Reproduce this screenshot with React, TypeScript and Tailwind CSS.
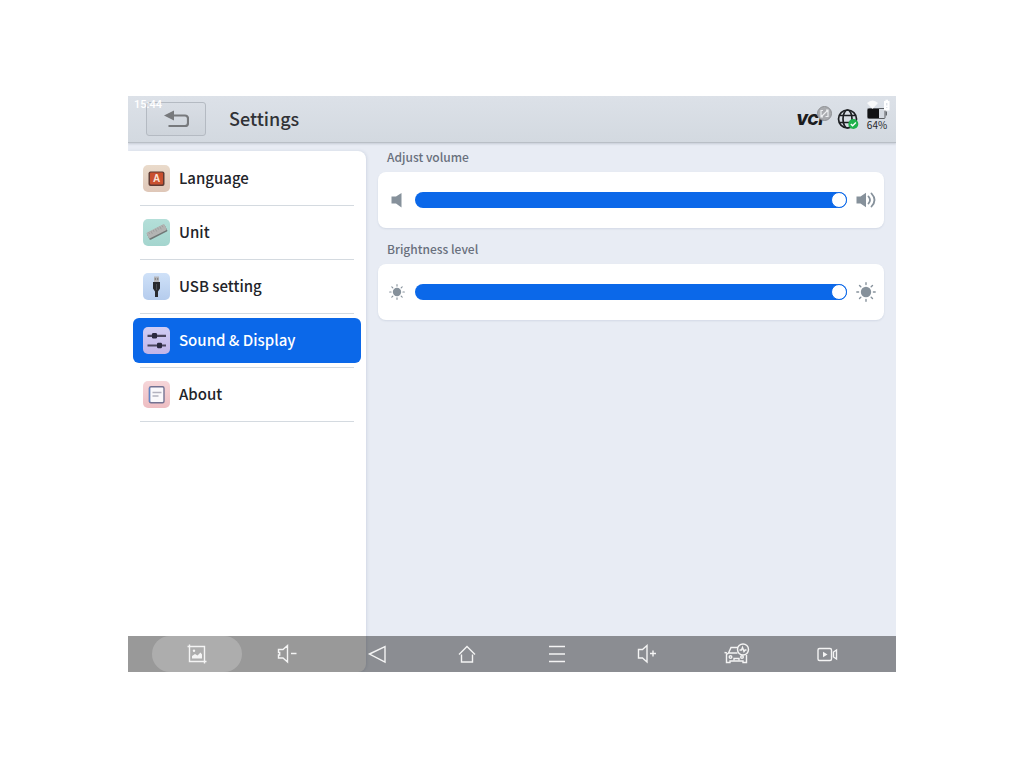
import React, { useState } from 'react';

type MenuItem = { id: string; label: string; tile: string; icon: React.ReactNode };

// Menu tile drawings, all on a 27x27 grid
const LanguageIcon = () => (
  <svg viewBox="0 0 27 27" className="size-full" aria-hidden="true">
    <rect x="5.5" y="6.5" width="16" height="14.5" rx="2" fill="#5f3a33" />
    <rect x="7" y="7.6" width="13" height="11.8" rx="1" fill="#c9502f" />
    <text x="13.5" y="17" textAnchor="middle" fontSize="10" fontWeight="700" fill="#fbe3d5" fontFamily="Liberation Sans, sans-serif">
      A
    </text>
  </svg>
);

const UnitIcon = () => (
  <svg viewBox="0 0 27 27" className="size-full" aria-hidden="true">
    <g transform="rotate(-27 14 13)">
      <rect x="4" y="9.5" width="20" height="7.5" rx="1" fill="#6f7776" />
      <rect x="4" y="9" width="20" height="6.5" rx="1" fill="#b3b4b3" />
      <path d="M6.5 9.5v2M9 9.5v3M11.5 9.5v2M14 9.5v3M16.5 9.5v2M19 9.5v3M21.5 9.5v2" stroke="#979998" strokeWidth=".7" />
    </g>
  </svg>
);

const UsbIcon = () => (
  <svg viewBox="0 0 27 27" className="size-full" aria-hidden="true">
    <rect x="11" y="3.5" width="5" height="6" fill="#b4b4b8" />
    <path d="M12.3 5v2M14.7 5v2" stroke="#777" strokeWidth=".9" />
    <path d="M10 9h7v6.5L15 18.5V24h-3v-5.5l-2-3z" fill="#292a2e" />
    <path d="M13.5 11v6" stroke="#55585e" strokeWidth=".8" />
  </svg>
);

const SlidersIcon = () => (
  <svg viewBox="0 0 27 27" className="size-full" aria-hidden="true">
    <path d="M4.5 8.8H23M4.5 18.5H23" stroke="#4b465e" strokeWidth="2.2" />
    <rect x="9" y="6" width="5" height="5.5" rx="1.2" fill="#2b2940" />
    <rect x="14" y="15.8" width="5" height="5.5" rx="1.2" fill="#2b2940" />
  </svg>
);

const AboutIcon = () => (
  <svg viewBox="0 0 27 27" className="size-full" aria-hidden="true">
    <rect x="6.5" y="5.7" width="14.5" height="16" rx="1.5" fill="#faf9fc" stroke="#737292" strokeWidth="1.4" />
    <path d="M6.5 6.5V21" stroke="#6185c8" strokeWidth="1.4" />
    <path d="M9.500 11.500h9M9.500 15h6" stroke="#b3b2bf" strokeWidth="1.3" />
  </svg>
);

const menu: MenuItem[] = [
  { id: 'language', label: 'Language', tile: 'from-[#eadbcb] to-[#dfc7b8]', icon: <LanguageIcon /> },
  { id: 'unit', label: 'Unit', tile: 'from-[#b4dfd9] to-[#a4d5ce]', icon: <UnitIcon /> },
  { id: 'usb', label: 'USB setting', tile: 'from-[#cfe1f8] to-[#b5cced]', icon: <UsbIcon /> },
  { id: 'sound', label: 'Sound & Display', tile: 'from-[#d0cdf4] to-[#c3b5e8]', icon: <SlidersIcon /> },
  { id: 'about', label: 'About', tile: 'from-[#f6d6d9] to-[#edbdc2]', icon: <AboutIcon /> },
];

const SpeakerLow = () => (
  <svg viewBox="0 0 20 20" className="size-5" fill="#86919b" aria-hidden="true">
    <path d="M4.5 6.5H9L14.500 3v14.500L9 13.500H4.500z" />
  </svg>
);

const SpeakerHigh = () => (
  <svg viewBox="0 0 20 20" className="size-5" aria-hidden="true">
    <path d="M.5 6.5h4L10 2.8v14.400l-5.500-3.700h-4z" fill="#86919b" />
    <path d="M12.500 6.500q3 3.500 0 7M15.500 3.500q6 6.500 0 13" fill="none" stroke="#86919b" strokeWidth="1.800" strokeLinecap="round" />
  </svg>
);

const Sun = ({ large }: { large?: boolean }) => (
  <svg viewBox="0 0 20 20" className={large ? 'size-5' : 'size-4'} aria-hidden="true">
    <circle cx="10" cy="10" r="5.2" fill="#86919b" />
    <path
      d="M10 .8v1.800M10 17.400v1.800M.8 10h1.800M17.400 10h1.800M3.500 3.500l1.300 1.300M15.200 15.200l1.300 1.300M3.500 16.500l1.300-1.300M15.200 4.800l1.300-1.300"
      stroke="#86919b"
      strokeWidth="1.4"
      strokeLinecap="round"
    />
  </svg>
);

// Navigation bar drawings, all on a 26x26 grid
const navIcons = [
  {
    label: 'Screenshot',
    art: (
      <>
        <path d="M5.500 3.500v2M3.500 5.500h17v15M5.500 5.500v15h17M20.500 20.500v2" />
        <path d="M8 17.500v-2.500l3-2 2.500 1.500 3-3 1.500 2v4z" fill="#f4f4f4" stroke="none" />
        <circle cx="10" cy="9.800" r="1.200" fill="#f4f4f4" stroke="none" />
      </>
    ),
  },
  { label: 'Volume down', art: <path d="M13.500 4.500v16.500L9 17H4.500V14h1.200v-2.500H4.500V8.500H9zM17 12.500h5.500" /> },
  { label: 'Back', art: <path d="M5.500 13 21 5.500v15.500z" /> },
  { label: 'Home', art: <path d="M5 13.500 13 5.500l8 8M7.500 13.500v7.500h11v-7.500" /> },
  { label: 'Recent apps', art: <path d="M5 5.500h16M5 13h16M5 20.500h16" /> },
  { label: 'Volume up', art: <path d="M13 4.500v16.500L8.500 17H4.500V8.500h4zM16 12.500h6M19 9.500v6" /> },
  {
    label: 'Vehicle diagnosis',
    art: (
      <>
        <path d="M14 6.500H7L4.500 12 2.500 13.500V21.500h3.500v-1.500h13v1.500h3.500V14M.5 11.500l2.500.5M4.500 12h9" />
        <circle cx="6.500" cy="16" r="1.300" />
        <circle cx="18" cy="16" r="1.300" />
        <path d="M10 19.500v-2h5v2" />
        <circle cx="19" cy="8.500" r="5.500" />
        <path d="M15.500 9h2l1-2.500 1.500 4 1-1.500h1.500" />
      </>
    ),
  },
  {
    label: 'Screen recording',
    art: (
      <>
        <rect x="4" y="7.500" width="13.500" height="12" rx="1.500" />
        <path d="M19.500 11 22.500 9v9l-3-2z" />
        <path d="M9 10.700v5.600l4.500-2.800z" fill="#f4f4f4" stroke="none" />
      </>
    ),
  },
];

type LevelProps = {
  id: string;
  label: string;
  low: React.ReactNode;
  high: React.ReactNode;
};

const LevelControl: React.FC<LevelProps> = ({ id, label, low, high }) => {
  const [value, setValue] = useState(100);

  return (
    <section>
      <label htmlFor={id} className="mb-1.5 block pl-[9px] text-[12px] leading-[18px] font-medium text-[#69707d]">
        {label}
      </label>
      <div className="flex h-14 items-center gap-2 rounded-lg bg-white px-2 shadow-[0_1px_2px_rgba(60,80,120,0.12)]">
        <span className="flex w-[21px] shrink-0 justify-center">{low}</span>
        <input
          id={id}
          type="range"
          min={0}
          max={100}
          value={value}
          onChange={(e) => setValue(Number(e.target.value))}
          className="h-4 min-w-0 flex-1 appearance-none rounded-full [&::-webkit-slider-thumb]:size-4 [&::-webkit-slider-thumb]:appearance-none [&::-webkit-slider-thumb]:rounded-full [&::-webkit-slider-thumb]:border [&::-webkit-slider-thumb]:border-[#0b68e9] [&::-webkit-slider-thumb]:bg-white"
          style={{ background: `linear-gradient(to right, #0b68e9 ${value}%, #d5dbe4 ${value}%)` }}
        />
        <span className="flex w-[21px] shrink-0 justify-center">{high}</span>
      </div>
    </section>
  );
};

const StatusIcons = () => (
  <div className="flex items-center gap-2">
    <div className="relative flex w-[33px]" title="VCI">
      <span className="pt-0.5 font-[Inter,sans-serif] text-[15px] leading-5 font-black text-[#1b1c1e] italic">VCI</span>
      <svg viewBox="0 0 15 15" className="absolute -top-0.5 right-[-3px] size-[15px]" aria-hidden="true">
        <circle cx="7.500" cy="7.500" r="7" fill="#a9abaf" stroke="#8e9094" />
        <path d="M6 4.500H4v6.500h2M4 11 11 4M9 4h2v6.500H8.500" fill="none" stroke="#eceef0" strokeWidth="1.200" />
      </svg>
    </div>
    <svg viewBox="0 0 22 22" className="size-[22px]" aria-hidden="true">
      <g fill="none" stroke="#1d1f22" strokeWidth="1.700">
        <circle cx="10.500" cy="11" r="9" />
        <ellipse cx="10.500" cy="11" rx="4.500" ry="9" />
        <path d="M2.500 7.500h16M2.500 14.500h16" />
      </g>
      <circle cx="16.300" cy="16" r="5" fill="#1fb14c" />
      <path d="m13.800 16 1.800 1.800 3.300-3.300" fill="none" stroke="#fff" strokeWidth="1.300" />
    </svg>
    <div className="flex w-5 flex-col items-center">
      <svg viewBox="0 0 20 11" className="h-[11px] w-5" aria-hidden="true">
        <rect x=".5" y=".5" width="17.500" height="10" rx="1" fill="#d5dae1" stroke="#5a5d61" />
        <rect x="1" y="1" width="11" height="9" fill="#111214" />
        <path d="M19.300 3.500v4" stroke="#5a5d61" strokeWidth="1.200" />
      </svg>
      <span className="text-[10px] leading-3 text-[#26282b]">64%</span>
    </div>
  </div>
);

const App: React.FC = () => {
  const [active, setActive] = useState('sound');

  return (
    <div className="flex min-h-screen flex-col bg-white px-32 py-24 font-['Noto_Sans_CJK_SC','Noto_Sans',sans-serif]">
      <div className="relative flex flex-1 flex-col overflow-hidden bg-[#e8ecf4]">
        <header className="z-10 flex h-[47px] shrink-0 items-center border-b border-[#b9bfc6] bg-linear-to-b from-[#dce1e8] to-[#d3d9e0] pr-[9px] pl-[18px] shadow-[0_1px_2px_rgba(90,100,120,0.25)]">
          <button
            type="button"
            aria-label="Go back"
            className="flex h-[34px] w-[60px] items-center justify-center rounded-[3px] border border-[#b4bac2] bg-linear-to-b from-[#d9dee5] to-[#ced4db]"
          >
            <svg viewBox="0 0 26 20" className="h-5 w-[26px]" aria-hidden="true">
              <path d="M8 6.500h14a3 3 0 0 1 3 3v4.500a3 3 0 0 1-3 3H5.500" fill="none" stroke="#77797c" strokeWidth="2.200" />
              <path d="M1 6.500 11 1.500v10z" fill="#77797c" />
            </svg>
          </button>
          <h1 className="ml-[23px] flex-1 pb-0.5 text-[18px] leading-6 font-medium text-[#303236]">Settings</h1>
          <StatusIcons />
        </header>

        {/* System status, laid over the header */}
        <div className="pointer-events-none absolute inset-x-0 top-0 z-20 flex h-[18px] items-center justify-between pr-1.5 pl-1.5 text-white">
          <span className="font-[Roboto,sans-serif] text-[11px] leading-4 font-medium">15:44</span>
          <svg viewBox="0 0 24 12" className="h-3 w-6" fill="#fff" aria-hidden="true">
            <path d="M1 4q5.500-5 11 0L6.500 10z" opacity=".8" />
            <path d="M18 2h1.500V.8h2.500V2h1.500v9.500H18z" />
            <path d="M20.800 4v2.500M20.800 8v1" stroke="#cfd5dd" />
          </svg>
        </div>

        <div className="flex flex-1">
          <aside className="mt-2 w-[238px] shrink-0 rounded-r-lg bg-white pt-[5px] shadow-[1px_0_3px_rgba(80,100,140,0.15)]">
            <nav aria-label="Settings">
              <ul>
                {menu.map((item) => (
                  <li key={item.id} className="mb-1">
                    <div className="mb-1 px-[5px]">
                      <button
                        type="button"
                        onClick={() => setActive(item.id)}
                        className={`flex h-[45px] w-full items-center gap-[9px] rounded-md px-2.5 text-left text-[15px] leading-6 font-medium ${
                          active === item.id ? 'bg-[#0b68e9] text-white' : 'text-[#222429]'
                        }`}
                      >
                        <span className={`size-[27px] shrink-0 overflow-hidden rounded-[5px] bg-linear-to-b ${item.tile}`}>{item.icon}</span>
                        <span className="pb-0.5">{item.label}</span>
                      </button>
                    </div>
                    <div className="mx-3 h-px bg-[#d4dae0]"></div>
                  </li>
                ))}
              </ul>
            </nav>
          </aside>

          <main className="flex min-w-0 flex-1 flex-col gap-3 px-3 pt-[5px]">
            <LevelControl id="volume" label="Adjust volume" low={<SpeakerLow />} high={<SpeakerHigh />} />
            <LevelControl id="brightness" label="Brightness level" low={<Sun />} high={<Sun large />} />
          </main>
        </div>

        {/* Translucent navigation bar over the panels */}
        <nav aria-label="System" className="absolute inset-x-0 bottom-0 z-20 flex h-9 bg-black/40 px-6">
          {navIcons.map((item, i) => (
            <button
              key={item.label}
              type="button"
              aria-label={item.label}
              className={`flex flex-1 items-center justify-center rounded-full ${i === 0 ? 'bg-white/20' : ''}`}
            >
              <svg viewBox="0 0 26 26" className="size-[26px]" fill="none" stroke="#f4f4f4" strokeWidth="1.4" aria-hidden="true">
                {item.art}
              </svg>
            </button>
          ))}
        </nav>
      </div>
    </div>
  );
};

export default App;
